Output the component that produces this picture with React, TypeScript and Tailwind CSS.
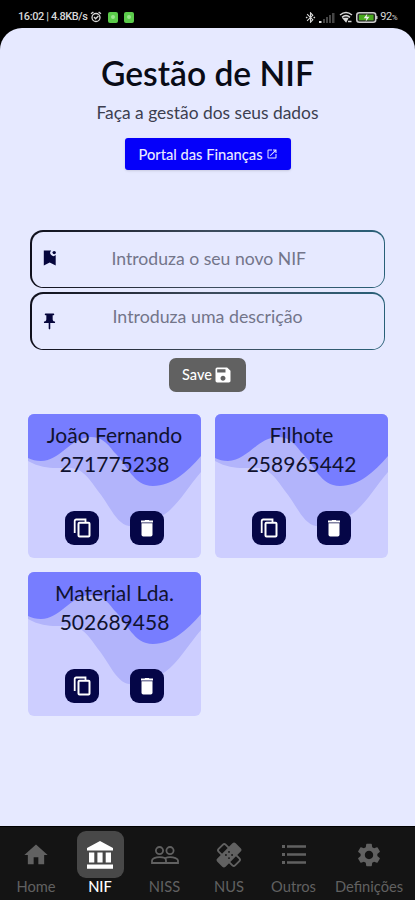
import {
  MdBluetoothConnected,
  MdHome,
  MdOpenInNew,
  MdPushPin,
  MdSave,
  MdSettings,
} from "react-icons/md";
import type { ReactNode } from "react";

const cards = [
  { name: "João Fernando", nif: "271775238" },
  { name: "Filhote", nif: "258965442" },
  { name: "Material Lda.", nif: "502689458" },
];

function BankIcon() {
  return (
    <svg viewBox="0 0 26 28" className="w-[26px] h-7" fill="currentColor">
      <path d="M13 0 26 7V9.5H0V7ZM2 11.5h5.3v10H2zM10.4 11.5h5.2v10h-5.2zM18.7 11.5H24v10h-5.3zM0 23.5h26v4.2H0z" />
    </svg>
  );
}

function PeopleIcon() {
  return (
    <svg viewBox="0 0 28 18" className="w-7 h-[18px]" fill="none" stroke="currentColor" strokeWidth="1.8">
      <circle cx="8.5" cy="4.6" r="3.6" />
      <circle cx="19" cy="4.6" r="3.6" />
      <path d="M1 17v-2.5c0-1.8 3.5-3.3 7.5-3.3s6.5 1.5 6.5 3.3V17zM14 12.3c1.5-.7 3.3-1.1 5-1.1 4 0 8 1.5 8 3.3V17H15" />
    </svg>
  );
}

// two crossed plasters, one solid and one outlined at the ends
function PlasterIcon() {
  return (
    <svg viewBox="0 0 28 28" className="w-[26px] h-[26px]">
      <g transform="rotate(45 14 14)">
        <rect x="1.5" y="8.7" width="25" height="10.6" rx="2" fill="none" stroke="currentColor" strokeWidth="2" />
      </g>
      <g transform="rotate(-45 14 14)">
        <rect x="0" y="7.7" width="28" height="12.6" rx="2.5" fill="currentColor" />
      </g>
      <g fill="#141414">
        <circle cx="14" cy="10.7" r="1" />
        <circle cx="10.7" cy="14" r="1" />
        <circle cx="17.3" cy="14" r="1" />
        <circle cx="14" cy="17.3" r="1" />
      </g>
    </svg>
  );
}

function ListIcon() {
  return (
    <svg viewBox="0 0 24 24" className="w-6 h-6" fill="currentColor">
      <path d="M0 2h3v3H0zM0 10h3v3H0zM0 18h3v3H0zM5 2.3h19v2.4H5zM5 10.3h19v2.4H5zM5 18.3h19v2.4H5z" />
    </svg>
  );
}

const tabs: Array<{ label: string; icon: ReactNode; width: string }> = [
  { label: "Home", icon: <MdHome className="w-7 h-7" />, width: "w-16" },
  { label: "NIF", icon: <BankIcon />, width: "w-16" },
  { label: "NISS", icon: <PeopleIcon />, width: "w-[65px]" },
  { label: "NUS", icon: <PlasterIcon />, width: "w-16" },
  { label: "Outros", icon: <ListIcon />, width: "w-[65px]" },
  { label: "Definições", icon: <MdSettings className="w-7 h-7" />, width: "w-[86px]" },
];

function BookmarkIcon() {
  return (
    <svg viewBox="0 0 14 16" className="w-3.5 h-4 text-[#06063c]" fill="currentColor">
      <path d="M.8.5h7.4a3 3 0 0 0 4.5 4.5V15.5L6.7 12.5.8 15.5z" />
      <circle cx="11.2" cy="2.6" r="1.7" />
    </svg>
  );
}

function CopyIcon() {
  return (
    <svg viewBox="0 0 18 20" className="w-[18px] h-5" fill="none" stroke="currentColor" strokeWidth="2">
      <path d="M1.7 15V3a1.5 1.5 0 0 1 1.5-1.5h9.3V4" strokeWidth="1.8" />
      <rect x="5.5" y="4.7" width="11" height="13.8" rx="1" />
    </svg>
  );
}

function TrashIcon() {
  return (
    <svg viewBox="0 0 14 18" className="w-3.5 h-[18px]" fill="currentColor">
      <path d="M1.5 4.3h11v11.4a1.8 1.8 0 0 1-1.8 1.8H3.3a1.8 1.8 0 0 1-1.8-1.8zM1 1.5h3.6l.6-.6h3.6l.6.6H13v2H1z" />
    </svg>
  );
}

function StatusBar() {
  return (
    <header className="h-7 shrink-0 pt-[7px] px-[18px] flex items-start justify-between text-[#d8d8d8] font-['Roboto',sans-serif]">
      <div className="flex items-center h-5">
        <span className="text-[11px] tracking-[-0.4px] font-medium whitespace-nowrap w-[72px]">16:02 | 4.8KB/s</span>
        <svg viewBox="0 0 12 12" className="w-3 h-3" fill="none" stroke="currentColor" strokeWidth="1.3">
          <circle cx="6" cy="6.5" r="4" />
          <path d="M1 2.8 3.4.9M11 2.8 8.6.9M4 6l1.6 1.8L8.4 5" />
        </svg>
        <span className="ml-[6px] w-[10px] h-[11px] rounded-[2px] bg-[#5bcb4b] flex items-center justify-center">
          <span className="w-1 h-1 rounded-full bg-[#9be58f]" />
        </span>
        <span className="ml-[6px] w-[10px] h-[11px] rounded-[2px] bg-[#5bcb4b] flex items-center justify-center">
          <span className="w-1 h-1 rounded-full bg-[#9be58f]" />
        </span>
      </div>
      <div className="flex items-center h-5">
        <MdBluetoothConnected className="w-[13px] h-[13px]" />
        <svg viewBox="0 0 16 11" className="ml-[2px] w-4 h-[11px]">
          <path d="M0 9h2.5v2H0z" fill="#e0e0e0" />
          <path d="M4 7h2v4H4zM7 5h2v6H7zM10 3h2v8h-2zM13 1h2.5v10H13z" fill="#454545" />
        </svg>
        <svg viewBox="0 0 14 12" className="ml-1 w-3.5 h-3" fill="none" stroke="currentColor" strokeWidth="1.5">
          <path d="M1 4Q7-.8 13 4M3 6.3Q7 3 11 6.3" />
          <path d="M4.5 7.5h4L7 10.5z" fill="currentColor" />
          <path d="M9 10.5h3.5" />
        </svg>
        <svg viewBox="0 0 22 11" className="ml-[3px] w-[22px] h-[11px]">
          <rect x=".75" y=".75" width="19" height="9.5" rx="2.5" fill="#252525" stroke="#c9c9c9" strokeWidth="1.5" />
          <path d="M20.5 4v3" stroke="#c9c9c9" strokeWidth="2" />
          <path d="M3 2.7h14.5v5.6H3z" fill="#48a91d" />
          <path d="m11.4 1.4-3.7 4.8h2.8l-1 3.6 4-5.1h-2.9z" fill="#eee" />
        </svg>
        <span className="ml-[2px] text-[11px] tracking-[-0.5px]">
          92<span className="text-[8px]">%</span>
        </span>
      </div>
    </header>
  );
}

function Field({ icon, placeholder, className }: { icon: ReactNode; placeholder: string; className: string }) {
  return (
    <div className="h-[58px] p-[1.5px] rounded-[13px] bg-linear-to-r from-[#10101c] via-[#3d4b5c] to-[#286078]">
      <div className="h-full rounded-[11.5px] bg-[#e6e9ff] flex items-center pl-[10px] pb-0.5">
        <span className="w-4 flex justify-center">{icon}</span>
        <span className={`leading-6 text-[#73758a] whitespace-nowrap ${className}`}>{placeholder}</span>
      </div>
    </div>
  );
}

function NifCard({ name, nif }: { name: string; nif: string }) {
  return (
    <article className="relative isolate h-36 rounded-md overflow-hidden bg-[#cdceff] text-center text-[#10122f]">
      <svg viewBox="0 0 173 144" preserveAspectRatio="none" className="absolute inset-0 -z-10 w-full h-full">
        <path
          d="M0 0H173V58C160 73 150 91 137 100C122 110 112 113 101 112C88 110 81 90 70 77C62 66 57 58 48 55C36 51 22 59 0 47Z"
          fill="#b2b4fb"
        />
        <path
          d="M0 0H173V42C159 58 144 72 125 72C105 72 100 51 86 38C78 27 72 23 63 23C43 23 32 47 13 47C8 47 4 46 0 44Z"
          fill="#777dff"
        />
      </svg>
      <h2 className="pt-[6px] text-[21px] leading-[29px]">{name}</h2>
      <p className="text-[21px] leading-[29px]">{nif}</p>
      <div className="mt-[33px] flex justify-center gap-[31px] text-white">
        <button className="w-[34px] h-[34px] rounded-[9px] bg-[#050647] flex items-center justify-center">
          <CopyIcon />
        </button>
        <button className="w-[34px] h-[34px] rounded-[9px] bg-[#050647] flex items-center justify-center">
          <TrashIcon />
        </button>
      </div>
    </article>
  );
}

export default function App() {
  return (
    <div className="w-full h-[900px] bg-black flex flex-col overflow-hidden font-['Lato',sans-serif]">
      <StatusBar />

      <main className="flex-1 rounded-t-[22px] bg-[#e6e9ff] flex flex-col">
        <h1 className="mt-[23px] text-center text-[33.6px] leading-[44px] font-semibold text-[#090b16]">Gestão de NIF</h1>
        <p className="mt-[6px] text-center text-[17.4px] leading-6 text-[#3c3e50]">Faça a gestão dos seus dados</p>
        <button className="mt-[13px] ml-[125px] w-[166px] h-8 rounded-[3px] bg-[#0500fa] text-[#e8e9ff] text-[14.7px] font-medium flex items-center justify-center gap-[3px] shadow-sm">
          Portal das Finanças
          <MdOpenInNew className="w-3 h-3" />
        </button>

        <div className="mt-[60px] ml-[30px] w-[355px] flex flex-col gap-1">
          <Field icon={<BookmarkIcon />} placeholder="Introduza o seu novo NIF" className="ml-[54px] mt-0.5 text-[17.6px]" />
          <Field
            icon={<MdPushPin className="w-[19px] h-[19px] shrink-0 mt-[3px] text-[#06063c]" />}
            placeholder="Introduza uma descrição"
            className="ml-[55px] -mt-2 text-[17.8px]"
          />
        </div>

        <button className="mt-2 ml-[169px] w-[77px] h-[34px] rounded-[7px] bg-[#616161] text-white text-[14.5px] font-medium flex items-center justify-center gap-px">
          Save
          <MdSave className="w-5 h-5" />
        </button>

        <section className="mt-[22px] ml-7 w-[360px] grid grid-cols-2 gap-x-3.5 gap-y-3.5">
          {cards.map((card) => (
            <NifCard key={card.nif} {...card} />
          ))}
        </section>
      </main>

      <nav className="h-[74px] shrink-0 border-t border-black bg-[#141414] flex pl-1 text-[#616161]">
        {tabs.map((tab) => (
          <button key={tab.label} className={`${tab.width} pt-1 flex flex-col items-center`}>
            <span
              className={`w-[47px] h-[47px] rounded-[9px] flex items-center justify-center ${
                tab.label === "NIF" ? "bg-[#484848] text-white" : ""
              }`}
            >
              {tab.icon}
            </span>
            <span className={`-mt-px text-[14.7px] leading-[18px] ${tab.label === "NIF" ? "text-white font-medium" : ""}`}>
              {tab.label}
            </span>
          </button>
        ))}
      </nav>
    </div>
  );
}
